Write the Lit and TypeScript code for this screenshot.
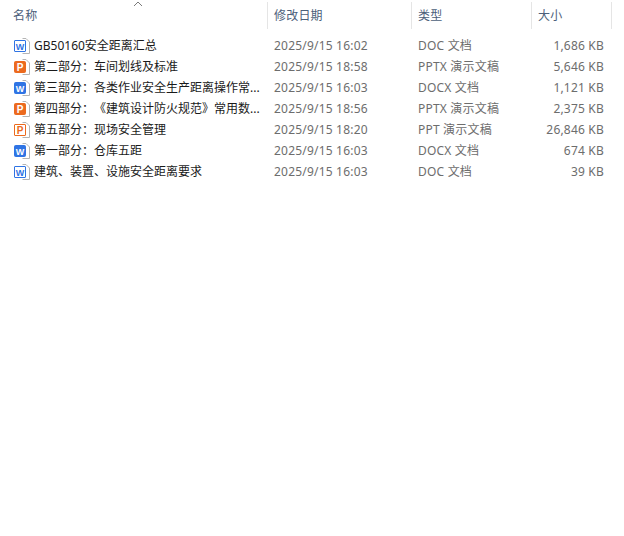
import { LitElement, html, css, svg } from "lit";
import { customElement } from "lit/decorators.js";

type Kind = "doc" | "docx" | "pptx" | "ppt";
interface Row { icon: Kind; name: string; date: string; type: string; size: string }

const rows: Row[] = [
  { icon: "doc", name: "GB50160安全距离汇总", date: "2025/9/15 16:02", type: "DOC 文档", size: "1,686 KB" },
  { icon: "pptx", name: "第二部分：车间划线及标准", date: "2025/9/15 18:58", type: "PPTX 演示文稿", size: "5,646 KB" },
  { icon: "docx", name: "第三部分：各类作业安全生产距离操作常...", date: "2025/9/15 16:03", type: "DOCX 文档", size: "1,121 KB" },
  { icon: "pptx", name: "第四部分：《建筑设计防火规范》常用数...", date: "2025/9/15 18:56", type: "PPTX 演示文稿", size: "2,375 KB" },
  { icon: "ppt", name: "第五部分：现场安全管理", date: "2025/9/15 18:20", type: "PPT 演示文稿", size: "26,846 KB" },
  { icon: "docx", name: "第一部分：仓库五距", date: "2025/9/15 16:03", type: "DOCX 文档", size: "674 KB" },
  { icon: "doc", name: "建筑、装置、设施安全距离要求", date: "2025/9/15 16:03", type: "DOC 文档", size: "39 KB" },
];

function fileIcon(kind: Kind) {
  const isWord = kind === "doc" || kind === "docx";
  const color = isWord ? "#2f74e4" : "#ec6a1e";
  const solid = kind === "docx" || kind === "pptx";
  const letter = isWord ? "W" : "P";
  return html`<svg class="icon" width="16" height="16" viewBox="0 0 16 16" aria-hidden="true">
    ${svg`<path d="M8.5 0.5 H12 L15.5 4 V15.5 H8.5" fill="none" stroke="#b4b4b4" stroke-width="1"/>
    <rect x="0.5" y="2.5" width="11" height="11" rx="${solid ? 1 : 0.5}"
      fill="${solid ? color : "#fff"}" stroke="${color}" stroke-width="1"/>
    <text x="6" y="11.5" text-anchor="middle" font-family="Liberation Sans, sans-serif" font-weight="700"
      font-size="${isWord ? 9 : 10}" fill="${solid ? "#fff" : color}">${letter}</text>`}
  </svg>`;
}

@customElement("app-root")
export class AppRoot extends LitElement {
  static styles = css`
    :host {
      display: block;
      width: 624px;
      height: 536px;
      background: #fff;
      font-family: "Noto Sans", "Noto Sans CJK SC", sans-serif;
      font-size: 12px;
      overflow: hidden;
      text-spacing-trim: space-all;
    }
    .grid {
      display: grid;
      grid-template-columns: 268px 144px 120px 80px;
    }
    .header {
      height: 35px;
      position: relative;
    }
    .hcell {
      margin-top: 2px;
      height: 27px;
      box-sizing: border-box;
      padding: 0 0 0 6px;
      display: flex;
      align-items: center;
      color: #4c607a;
      border-right: 1px solid #e5e5e5;
      line-height: 27px;
      letter-spacing: 0.2px;
    }
    .hcell.first {
      padding-left: 13px;
    }
    .chevron {
      position: absolute;
      left: 133px;
      top: 1px;
    }
    .list {
      display: flex;
      flex-direction: column;
    }
    .row {
      height: 21px;
      align-items: center;
      color: #6d6d6d;
      line-height: 21px;
      white-space: nowrap;
      letter-spacing: 0.2px;
    }
    .name {
      display: flex;
      align-items: center;
      gap: 4px;
      padding-left: 14px;
      color: #1a1a1a;
      letter-spacing: 0;
    }
    .icon {
      flex: none;
    }
    .date {
      padding-left: 6px;
    }
    .type {
      padding-left: 6px;
    }
    .size {
      text-align: right;
      padding-right: 8px;
    }
  `;

  render() {
    return html`
      <div class="grid header">
        <svg class="chevron" width="10" height="6" viewBox="0 0 10 6" aria-hidden="true">
          <path d="M1 5 L5 1 L9 5" fill="none" stroke="#7a7a7a" stroke-width="1"/>
        </svg>
        <div class="hcell first">名称</div>
        <div class="hcell">修改日期</div>
        <div class="hcell">类型</div>
        <div class="hcell">大小</div>
      </div>
      <div class="list">
        ${rows.map(
          (r) => html`<div class="grid row">
            <div class="name">${fileIcon(r.icon)}<span>${r.name}</span></div>
            <div class="date">${r.date}</div>
            <div class="type">${r.type}</div>
            <div class="size">${r.size}</div>
          </div>`
        )}
      </div>
    `;
  }
}
